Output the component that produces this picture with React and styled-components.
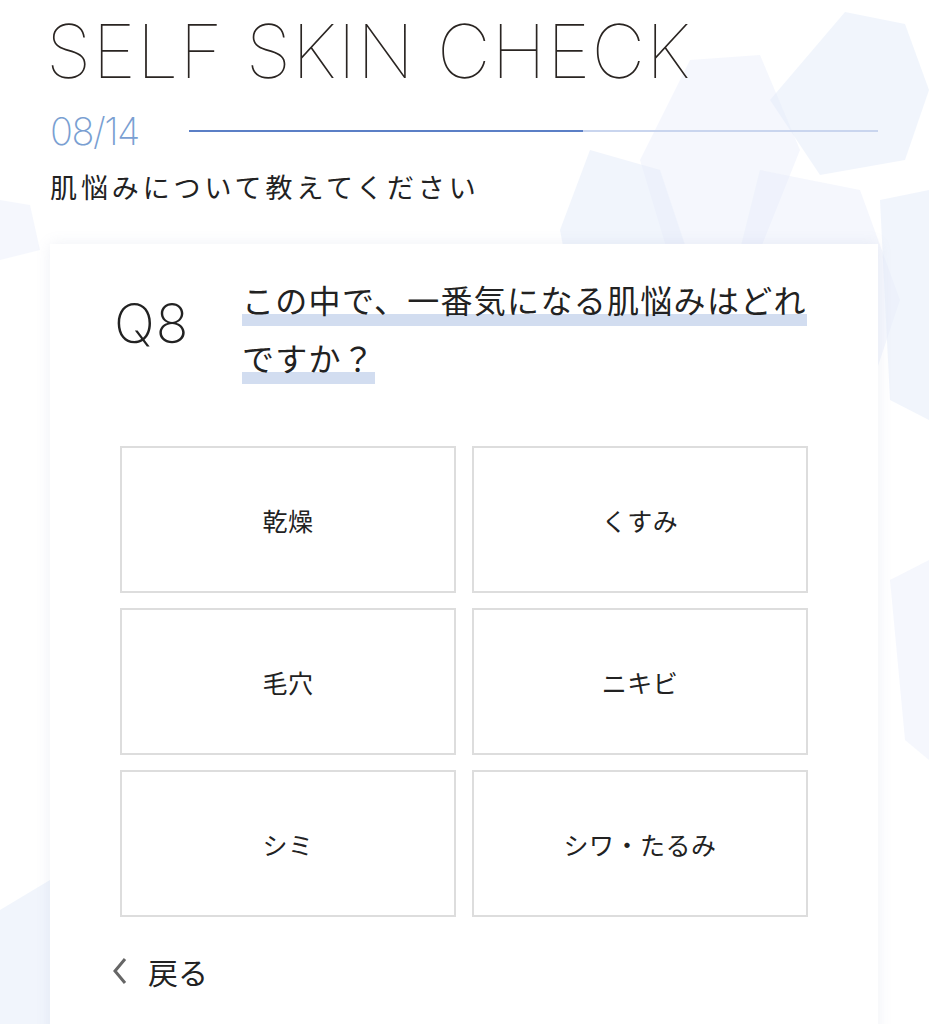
import styled, { createGlobalStyle } from "styled-components";

const GlobalStyle = createGlobalStyle`
  html, body {
    margin: 0;
    padding: 0;
    background: #ffffff;
  }
  body {
    font-family: "Noto Sans CJK JP", "Noto Sans", sans-serif;
    color: #222;
  }
`;

const Page = styled.div`
  position: relative;
  height: 1024px;
  overflow: hidden;
`;

const Backdrop = styled.svg`
  position: absolute;
  top: 0;
  left: 0;
  width: 929px;
  height: 1024px;
  z-index: 0;
`;

const Content = styled.div`
  position: relative;
  z-index: 1;
  padding: 13px 51px 0 46px;
`;

const Title = styled.h1`
  margin: 0;
  font-family: Inter, "Liberation Sans", sans-serif;
  font-weight: 100;
  font-size: 74px;
  line-height: 76px;
  color: #2a2522;
  letter-spacing: 1.1px;
`;

const ProgressRow = styled.div`
  display: flex;
  align-items: center;
  gap: 50px;
  margin-top: 22px;
  padding-left: 4px;
`;

const Count = styled.span`
  font-family: Inter, "Liberation Sans", sans-serif;
  font-weight: 200;
  font-size: 38px;
  line-height: 40px;
  color: #7a9fd2;
  letter-spacing: -1.5px;
`;

const Track = styled.div`
  flex: 1;
  height: 2px;
  background: #c9d5ee;
`;

const Fill = styled.div`
  height: 100%;
  background: #5b7fc6;
`;

const Lead = styled.p`
  margin: 16px 0 0 4px;
  font-size: 27px;
  line-height: 40px;
  letter-spacing: 3.9px;
  color: #222;
`;

const Card = styled.section`
  margin: 37px 0 0 4px;
  background: #fff;
  box-shadow: 0 0 14px rgba(120, 140, 180, 0.12);
  padding: 26px 70px 30px;
  min-height: 780px;
`;

const Question = styled.div`
  display: flex;
  align-items: flex-start;
  gap: 48px;
`;

const QNum = styled.span`
  flex: none;
  width: 80px;
  margin-left: -6px;
  margin-top: 24px;
  font-family: Inter, "Liberation Sans", sans-serif;
  font-weight: 200;
  font-size: 54px;
  line-height: 60px;
  letter-spacing: 1px;
  color: #222;
`;

const QText = styled.p`
  margin: 0;
  width: 572px;
  font-size: 32px;
  line-height: 58px;
  letter-spacing: 1.3px;
  color: #222;
`;

const Mark = styled.span`
  padding-bottom: 6px;
  background: linear-gradient(transparent 73%, #d2ddf0 73%, #d2ddf0 96%, transparent 96%);
`;

const Options = styled.div`
  display: grid;
  grid-template-columns: 1fr 1fr;
  gap: 15px 16px;
  margin-top: 60px;
`;

const Option = styled.button`
  box-sizing: border-box;
  height: 147px;
  border: 2px solid #dddddd;
  background: #fff;
  font-family: "Noto Sans CJK JP", sans-serif;
  font-size: 25px;
  color: #222;
  letter-spacing: 0.5px;
  cursor: pointer;
`;

const Back = styled.a`
  display: inline-flex;
  align-items: center;
  gap: 20px;
  margin-top: 34px;
  margin-left: -8px;
  font-size: 30px;
  line-height: 40px;
  color: #222;
  cursor: pointer;
`;

const options = ["乾燥", "くすみ", "毛穴", "ニキビ", "シミ", "シワ・たるみ"];

const shapes = [
  "845,12 905,24 929,90 905,160 820,175 770,100",
  "690,60 760,55 800,150 760,250 670,260 640,160",
  "590,150 660,170 690,260 650,330 575,310 560,230",
  "760,170 860,190 900,300 860,420 770,400 730,290",
  "880,200 929,190 929,420 890,400",
  "890,580 929,560 929,760 905,740",
  "0,910 50,880 80,960 70,1024 0,1024",
  "0,200 30,205 40,250 0,260",
];

const App = () => {
  return (
    <Page>
      <GlobalStyle />
      <Backdrop viewBox="0 0 929 1024">
        {shapes.map((p, i) => (
          <polygon key={i} points={p} fill="#e6ecf9" opacity={i % 2 ? 0.4 : 0.55} />
        ))}
      </Backdrop>
      <Content>
        <Title>SELF SKIN CHECK</Title>
        <ProgressRow>
          <Count>08/14</Count>
          <Track>
            <Fill style={{ width: `${(8 / 14) * 100}%` }} />
          </Track>
        </ProgressRow>
        <Lead>肌悩みについて教えてください</Lead>
        <Card>
          <Question>
            <QNum>Q8</QNum>
            <QText>
              <Mark>この中で、一番気になる肌悩みはどれですか？</Mark>
            </QText>
          </Question>
          <Options>
            {options.map((o) => (
              <Option key={o}>{o}</Option>
            ))}
          </Options>
          <Back>
            <svg width="16" height="30" viewBox="0 0 16 30">
              <polyline points="13,3 3,15 13,27" fill="none" stroke="#666" strokeWidth="3" />
            </svg>
            戻る
          </Back>
        </Card>
      </Content>
    </Page>
  );
};

export default App;
